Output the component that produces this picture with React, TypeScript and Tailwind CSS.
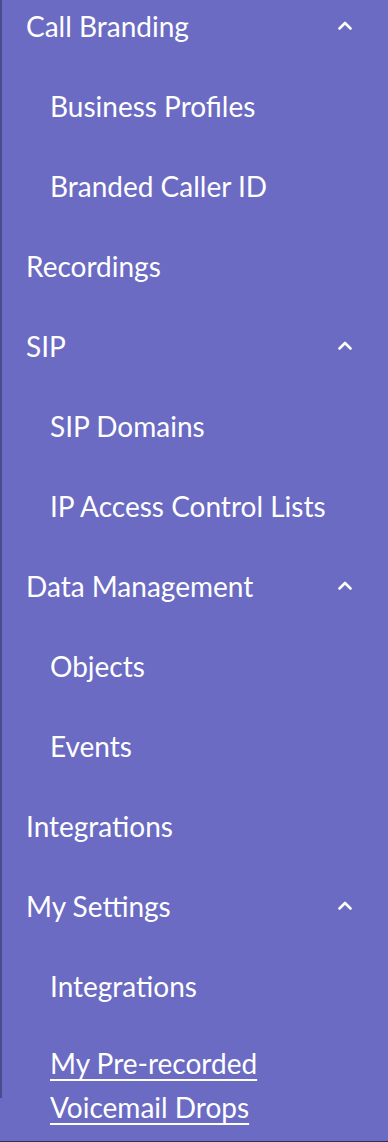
import React from 'react';

type NavItem = {
  label: string;
  indent?: boolean;
  expanded?: boolean;
};

const items: NavItem[] = [
  { label: 'Call Branding', expanded: true },
  { label: 'Business Profiles', indent: true },
  { label: 'Branded Caller ID', indent: true },
  { label: 'Recordings' },
  { label: 'SIP', expanded: true },
  { label: 'SIP Domains', indent: true },
  { label: 'IP Access Control Lists', indent: true },
  { label: 'Data Management', expanded: true },
  { label: 'Objects', indent: true },
  { label: 'Events', indent: true },
  { label: 'Integrations' },
  { label: 'My Settings', expanded: true },
  { label: 'Integrations', indent: true },
];

const ChevronUp = () => (
  <svg width="18" height="18" viewBox="0 0 18 18" fill="none">
    <path d="M3.5 11.5 L9 6 L14.5 11.5" stroke="white" strokeWidth="2.6" strokeLinecap="round" strokeLinejoin="round" />
  </svg>
);

export default function App() {
  return (
    <div className="h-[1142px] w-[388px] overflow-hidden bg-[#6b6bc3] border-b border-[#2f2f5c] font-['Lato','Liberation_Sans',sans-serif] text-white">
      <div className="h-[1112px] border-l-2 border-[#4a4a8c]">
        <ul className="-mt-[14px]">
          {items.map((item, i) => (
            <li
              key={i}
              className={`flex h-20 items-center justify-between pr-[34px] text-[28px] ${item.indent ? 'pl-[48px]' : 'pl-[24px]'}`}
            >
              <span>{item.label}</span>
              {item.expanded && <ChevronUp />}
            </li>
          ))}
          <li className="pl-[48px] py-[15px] text-[28px] leading-[44px]">
            <a href="#" className="underline decoration-2 underline-offset-[5px]">
              My Pre-recorded<br />Voicemail Drops
            </a>
          </li>
        </ul>
      </div>
    </div>
  );
}
